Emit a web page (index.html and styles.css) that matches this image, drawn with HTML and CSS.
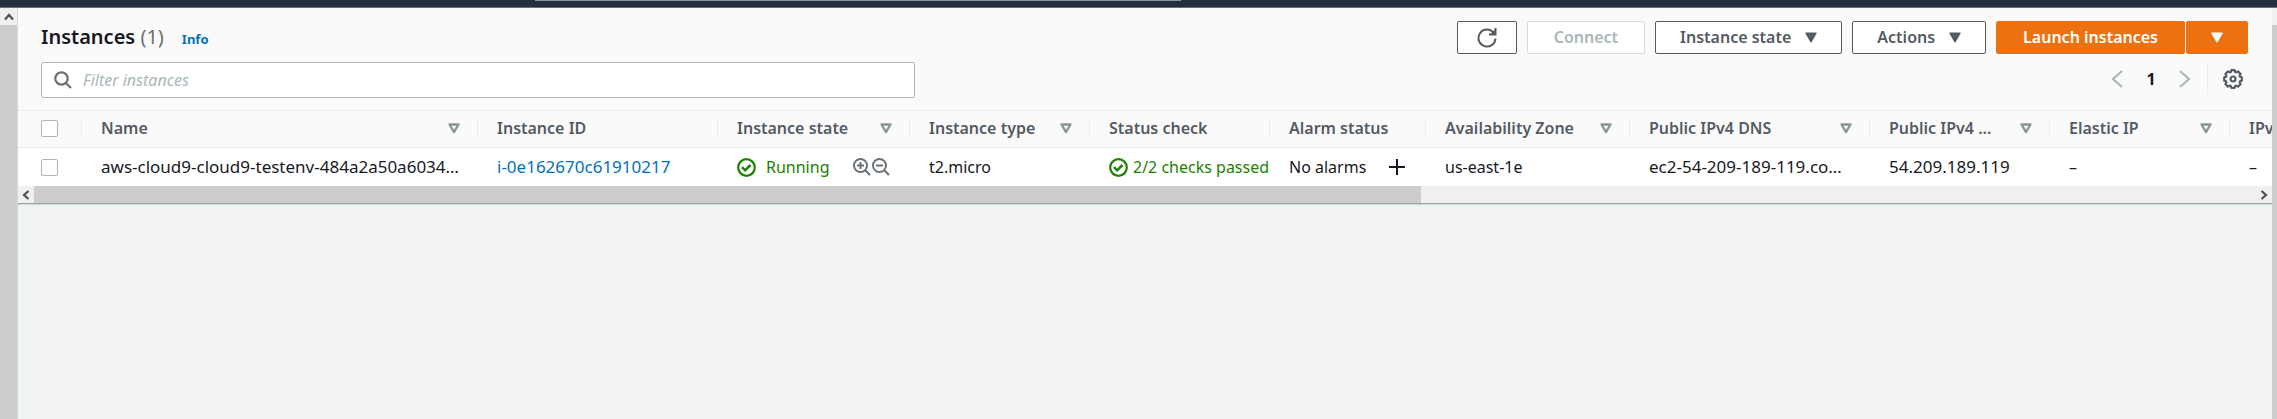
FILE: index.html
```
<!DOCTYPE html>
<html lang="en">
<head>
<meta charset="utf-8">
<title>Instances</title>
<link rel="stylesheet" href="styles.css">
</head>
<body>
<svg class="defs" aria-hidden="true">
  <symbol id="sort" viewBox="0 0 12 11"><path d="M1.500 1.500h9L6 9z" fill="none" stroke="currentColor" stroke-width="2.400" stroke-linejoin="round"/></symbol>
  <symbol id="caret" viewBox="0 0 12 11"><path d="M1 .5h10q1 0 .6 1L6.700 10q-.7 1-1.400 0L.4 1.500q-.4-1 .6-1z" fill="currentColor"/></symbol>
  <symbol id="check" viewBox="0 0 19 19"><g fill="none" stroke="currentColor" stroke-width="2.200"><circle cx="9.500" cy="9.500" r="8.300"/><path d="M5 9.200l3.200 3.100L13.500 7" stroke-width="2.500"/></g></symbol>
  <symbol id="chevron" viewBox="0 0 12 18"><path d="M11 1L2 9l9 8" fill="none" stroke="currentColor" stroke-width="2.200"/></symbol>
  <symbol id="arrow" viewBox="0 0 10 10"><path d="M7.500 1L3 5l4.500 4" fill="none" stroke="currentColor" stroke-width="2.200"/></symbol>
</svg>
<header class="topbar"><div class="topbar-search"></div></header>
<div class="layout">
  <div class="vbar"><span class="vbar-button"><svg class="arrow up"><use href="#arrow"/></svg></span></div>
  <main class="main">
    <section class="panel">
      <div class="panel-header">
        <div class="title-row">
          <h1 class="title">Instances <span class="count">(1)</span></h1>
          <a class="info" href="#">Info</a>
          <div class="actions">
            <button class="btn icon-only" type="button" aria-label="Refresh"><svg class="icon-refresh" viewBox="0 0 20 20"><g fill="none" stroke="currentColor" stroke-width="2"><path d="M18.500 10.500A8.500 8.500 0 1 1 16.600 4.700"/><path d="M12 6.500h6.500V0"/></g><path d="M13.500 6L18.500 1v5z" fill="currentColor"/></svg></button>
            <button class="btn disabled" type="button" disabled>Connect</button>
            <button class="btn menu" type="button">Instance state<svg class="caret"><use href="#caret"/></svg></button>
            <button class="btn menu" type="button">Actions<svg class="caret"><use href="#caret"/></svg></button>
            <div class="split">
              <button class="btn primary" type="button">Launch instances</button>
              <button class="btn primary menu" type="button" aria-label="More launch options"><svg class="caret"><use href="#caret"/></svg></button>
            </div>
          </div>
        </div>
        <div class="filter-row">
          <label class="filter"><svg class="icon-search" viewBox="0 0 18 18"><g fill="none" stroke="currentColor" stroke-width="2.200"><circle cx="7.500" cy="7.500" r="6.200"/><path d="M12 12l5 5"/></g></svg><input class="filter-input" type="text" placeholder="Filter instances" aria-label="Filter instances"></label>
          <div class="pager">
            <button class="plain chevron-button" type="button" aria-label="Previous page"><svg class="chevron"><use href="#chevron"/></svg></button>
            <button class="plain page" type="button">1</button>
            <button class="plain chevron-button" type="button" aria-label="Next page"><svg class="chevron next"><use href="#chevron"/></svg></button>
            <div class="prefs"><button class="plain gear-button" type="button" aria-label="Preferences"><svg class="icon-gear" viewBox="0 0 20 20"><g fill="none" stroke="currentColor" stroke-width="2.200" stroke-linejoin="round"><path d="M8.300 1.200h3.400l.5 1.800 1 .4 1.800-1 2.600 2.600-1 1.800.4 1 1.800.5v3.400l-1.800.5-.4 1 1 1.800-2.600 2.600-1.800-1-1 .4-.5 1.800H8.300l-.5-1.800-1-.4-1.800 1L2.400 15l1-1.800-.4-1-1.800-.5V8.300L3 7.800l.4-1-1-1.800L5 2.400l1.800 1 1-.4z"/><circle cx="10" cy="10" r="2.500"/></g></svg></button></div>
          </div>
        </div>
      </div>
      <div class="table-wrap">
        <table class="table">
          <colgroup><col class="c-check"><col class="c-name"><col class="c-l"><col class="c-state"><col class="c-m"><col class="c-m"><col class="c-alarm"><col class="c-zone"><col class="c-l"><col class="c-m"><col class="c-m"><col class="c-m"></colgroup>
          <thead>
            <tr>
              <th class="pick"><input class="checkbox" type="checkbox" aria-label="Select all instances"></th>
              <th><div class="head"><span class="label">Name</span><svg class="sort"><use href="#sort"/></svg></div></th>
              <th><div class="head"><span class="label">Instance ID</span></div></th>
              <th><div class="head"><span class="label">Instance state</span><svg class="sort"><use href="#sort"/></svg></div></th>
              <th><div class="head"><span class="label">Instance type</span><svg class="sort"><use href="#sort"/></svg></div></th>
              <th><div class="head"><span class="label">Status check</span></div></th>
              <th><div class="head"><span class="label">Alarm status</span></div></th>
              <th><div class="head"><span class="label">Availability Zone</span><svg class="sort"><use href="#sort"/></svg></div></th>
              <th><div class="head"><span class="label">Public IPv4 DNS</span><svg class="sort"><use href="#sort"/></svg></div></th>
              <th><div class="head"><span class="label">Public IPv4 ...</span><svg class="sort"><use href="#sort"/></svg></div></th>
              <th><div class="head"><span class="label">Elastic IP</span><svg class="sort"><use href="#sort"/></svg></div></th>
              <th><div class="head"><span class="label">IPv</span></div></th>
            </tr>
          </thead>
          <tbody>
            <tr>
              <td class="pick"><input class="checkbox" type="checkbox" aria-label="Select instance"></td>
              <td class="ident">aws-cloud9-cloud9-testenv-484a2a50a6034…</td>
              <td class="ident"><a class="link" href="#">i-0e162670c61910217</a></td>
              <td><div class="cell"><span class="ok roomy"><svg class="check"><use href="#check"/></svg>Running</span><span class="zooms"><button class="plain" type="button" aria-label="Filter for value"><svg class="lens" viewBox="0 0 18 18"><g fill="none" stroke="currentColor" stroke-width="2"><circle cx="7.500" cy="7.500" r="6.500"/><path d="M12 12l5 5M4 7.500h7M7.500 4v7"/></g></svg></button><button class="plain" type="button" aria-label="Filter out value"><svg class="lens" viewBox="0 0 18 18"><g fill="none" stroke="currentColor" stroke-width="2"><circle cx="7.500" cy="7.500" r="6.500"/><path d="M12 12l5 5M4 7.500h7"/></g></svg></button></span></div></td>
              <td>t2.micro</td>
              <td><span class="ok"><svg class="check"><use href="#check"/></svg>2/2 checks passed</span></td>
              <td><div class="cell">No alarms<button class="plain add" type="button" aria-label="Add alarm"><svg class="icon-plus" viewBox="0 0 18 18"><path d="M9 1v16M1 9h16" stroke="currentColor" stroke-width="2"/></svg></button></div></td>
              <td>us-east-1e</td>
              <td class="ident">ec2-54-209-189-119.co…</td>
              <td class="ident">54.209.189.119</td>
              <td>–</td>
              <td>–</td>
            </tr>
          </tbody>
        </table>
      </div>
      <div class="hbar"><svg class="arrow"><use href="#arrow"/></svg><div class="hbar-track"><div class="hbar-thumb"></div></div><svg class="arrow right"><use href="#arrow"/></svg></div>
    </section>
  </main>
  <div class="vbar edge"><span class="vbar-button"></span></div>
</div>
</body>
</html>
```
FILE: styles.css
```
* { box-sizing: border-box; }
body {
  margin: 0;
  min-height: 100vh;
  display: flex;
  flex-direction: column;
  background: #f2f3f3;
  color: #16191f;
  font: 16px/24px "Noto Sans", "Open Sans", sans-serif;
}
button, input { font: inherit; color: inherit; }
svg { display: block; flex: none; }
.defs { position: absolute; width: 0; height: 0; }
.topbar { height: 8px; background: #232f3e; border-bottom: 1px solid #687078; }
.topbar-search { width: 646px; height: 1px; margin-left: 535px; background: #879596; }
.layout { flex: 1; display: flex; }
.vbar { width: 17px; flex: none; background: #cdcdcd; }
.vbar-button { display: flex; height: 17px; align-items: center; justify-content: center; background: #f0f0f0; }
.vbar.edge { width: 5px; }
.arrow { width: 10px; height: 10px; color: #505050; }
.arrow.up { transform: rotate(90deg); }
.arrow.right { transform: rotate(180deg); }
.main { flex: 1; min-width: 0; border-left: 1px solid #d5dbdb; }
.panel { background: #fafafa; border-bottom: 1px solid #95a5a6; box-shadow: 0 1px 1px #d5dbdb; }
.panel-header { padding: 13px 24px 12px 23px; border-bottom: 1px solid #eaeded; }
.title-row { display: flex; align-items: center; height: 33px; }
.title { margin: 0; padding-bottom: 2px; font-size: 20px; line-height: 32px; font-weight: 600; }
.count { font-weight: 400; color: #687078; }
.info { margin: 2px 0 0 18px; font-size: 13px; font-weight: 700; color: #0073bb; text-decoration: none; }
.actions { display: flex; gap: 10px; margin-left: auto; }
.btn {
  display: flex;
  align-items: center;
  gap: 14px;
  height: 33px;
  padding: 0 26px 1px;
  border: 1px solid #545b64;
  border-radius: 2px;
  background: #fff;
  color: #545b64;
  font-weight: 600;
  white-space: nowrap;
}
.btn.menu { padding: 0 24px 1px; }
.btn.icon-only { padding: 0 19px; }
.btn.disabled { border-color: #d5dbdb; color: #aab7b8; }
.btn.primary { border-color: #ec7211; background: #ec7211; color: #fff; }
.split { display: flex; gap: 1px; }
.caret, .sort { width: 12px; height: 11px; }
.sort { color: #879596; }
.icon-refresh, .icon-gear { width: 20px; height: 20px; }
.filter-row { display: flex; align-items: flex-start; margin-top: 8px; }
.filter { display: flex; align-items: center; gap: 11px; width: 874px; height: 36px; padding: 0 12px; border: 1px solid #aab7b8; border-radius: 2px; background: #fff; }
.icon-search { width: 18px; height: 18px; color: #687078; }
.filter-input { flex: 1; min-width: 0; padding: 0 0 1px; border: 0; outline: 0; background: none; }
.filter-input::placeholder { color: #aab7b8; font-style: italic; opacity: 1; }
.plain { display: block; padding: 0; border: 0; background: none; }
.pager { display: flex; align-items: center; height: 33px; margin-left: auto; }
.chevron { width: 12px; height: 18px; color: #aab7b8; }
.chevron.next { transform: scaleX(-1); }
.page { width: 56px; font-weight: 700; }
.prefs { display: flex; align-items: center; height: 33px; margin-left: 16px; padding: 0 5px 0 15px; border-left: 1px solid #eaeded; }
.icon-gear { color: #545b64; }
.table-wrap { overflow: hidden; }
.table { width: 2392px; table-layout: fixed; border-collapse: separate; border-spacing: 0; }
.c-check { width: 64px; }
.c-name { width: 396px; }
.c-l { width: 240px; }
.c-state { width: 192px; }
.c-m { width: 180px; }
.c-alarm { width: 156px; }
.c-zone { width: 204px; }
th, td { padding: 0 0 0 19px; text-align: left; white-space: nowrap; overflow: hidden; }
th { height: 37px; padding: 0 0 1px; border-bottom: 1px solid #eaeded; color: #545b64; font-weight: 600; }
td { height: 38px; background: #fff; }
.ident { font-size: 17px; }
.head { display: flex; align-items: center; justify-content: space-between; height: 18px; padding: 0 17px 0 19px; border-right: 1px solid #eaeded; }
.label { padding-bottom: 2px; }
.pick { padding-left: 23px; }
th.pick { background: linear-gradient(#eaeded, #eaeded) right center / 1px 18px no-repeat; }
.checkbox { display: block; appearance: none; width: 17px; height: 17px; margin: 0; border: 1px solid #aab7b8; border-radius: 2px; background: #fff; }
.link { color: #0073bb; text-decoration: none; }
.cell { display: flex; align-items: center; justify-content: space-between; padding-right: 20px; }
.ok { display: flex; align-items: center; gap: 5px; color: #1d8102; }
.ok.roomy { gap: 10px; }
.check { width: 19px; height: 19px; }
.zooms { display: flex; gap: 1px; color: #687078; }
.lens, .icon-plus { width: 18px; height: 18px; }
.hbar { display: flex; align-items: center; gap: 3px; height: 17px; padding: 0 3px; background: #f0f0f0; }
.hbar-track { flex: 1; height: 17px; }
.hbar-thumb { width: 62.4%; height: 17px; background: #cdcdcd; }
```
